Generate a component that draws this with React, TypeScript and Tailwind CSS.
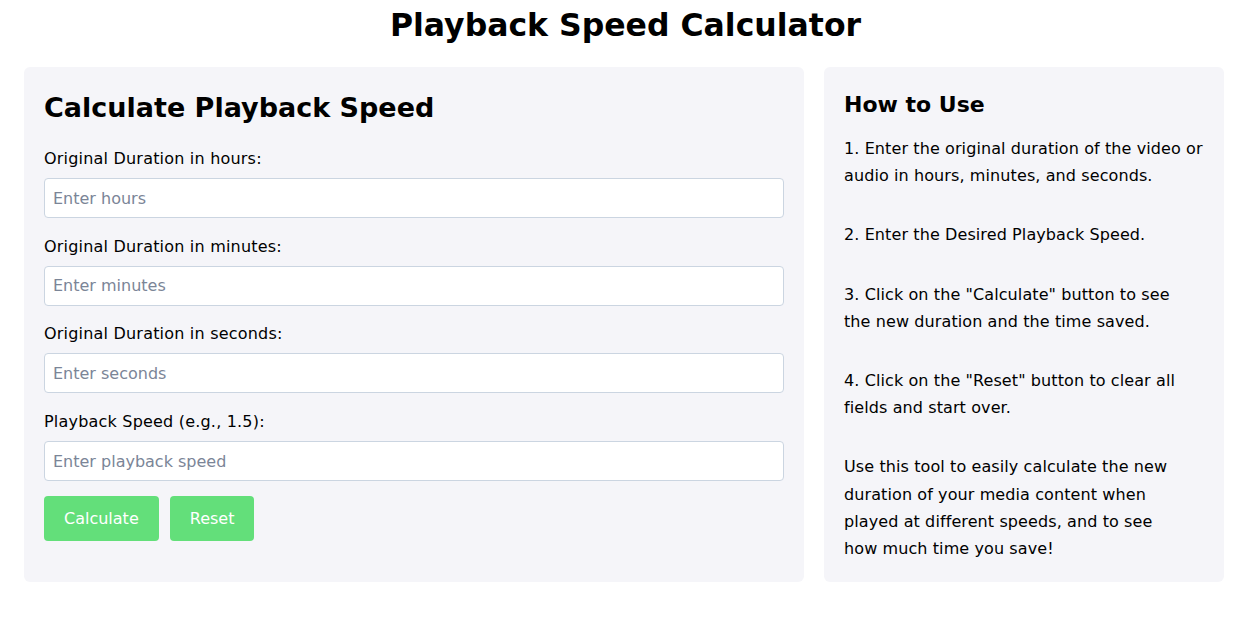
const fields = [
  { label: "Original Duration in hours:", placeholder: "Enter hours" },
  { label: "Original Duration in minutes:", placeholder: "Enter minutes" },
  { label: "Original Duration in seconds:", placeholder: "Enter seconds" },
  { label: "Playback Speed (e.g., 1.5):", placeholder: "Enter playback speed" },
];

// line breaks follow the reference layout
const steps = [
  ["1. Enter the original duration of the video or", "audio in hours, minutes, and seconds."],
  ["2. Enter the Desired Playback Speed."],
  ['3. Click on the "Calculate" button to see', "the new duration and the time saved."],
  ['4. Click on the "Reset" button to clear all', "fields and start over."],
  [
    "Use this tool to easily calculate the new",
    "duration of your media content when",
    "played at different speeds, and to see",
    "how much time you save!",
  ],
];

export default function App() {
  return (
    <div className="min-h-screen bg-white text-black font-['DejaVu_Sans',sans-serif]">
      <h1 className="pt-[2px] text-center text-[31.5px] leading-[46px] font-bold">
        Playback Speed Calculator
      </h1>
      <div className="mt-[19px] ml-6 grid grid-cols-[780px_400px] items-start gap-5">
        <section className="rounded-md bg-[#f5f5f9] px-5 pt-[23px] pb-[41px]">
          <h2 className="text-[27px] leading-[36px] font-bold">
            Calculate Playback Speed
          </h2>
          <div className="mt-[21px] flex flex-col gap-[16.7px]">
            {fields.map((f) => (
              <div key={f.label}>
                <label className="block text-base leading-6 tracking-[0.2px]">
                  {f.label}
                </label>
                <input
                  type="text"
                  placeholder={f.placeholder}
                  className="mt-[7px] block h-10 w-full rounded border border-[#cbd5e1] bg-white px-2 text-base outline-none placeholder:text-[#7b8597]"
                />
              </div>
            ))}
          </div>
          <div className="mt-[15px] flex gap-[11px]">
            <button className="h-[45px] rounded bg-[#63df7a] px-5 text-base text-white">
              Calculate
            </button>
            <button className="h-[45px] rounded bg-[#63df7a] px-5 text-base text-white">
              Reset
            </button>
          </div>
        </section>
        <section className="rounded-md bg-[#f5f5f9] px-5 pt-[23px] pb-5">
          <h2 className="text-[22px] leading-[30px] font-bold">How to Use</h2>
          <div className="mt-[15px]">
            {steps.map((lines) => (
              <p
                key={lines[0]}
                className="mb-8 text-base leading-[27.2px] tracking-[0.1px] whitespace-nowrap last:mb-0"
              >
                {lines.map((l, i) => (
                  <span key={l}>
                    {i > 0 && <br />}
                    {l}
                  </span>
                ))}
              </p>
            ))}
          </div>
        </section>
      </div>
    </div>
  );
}
